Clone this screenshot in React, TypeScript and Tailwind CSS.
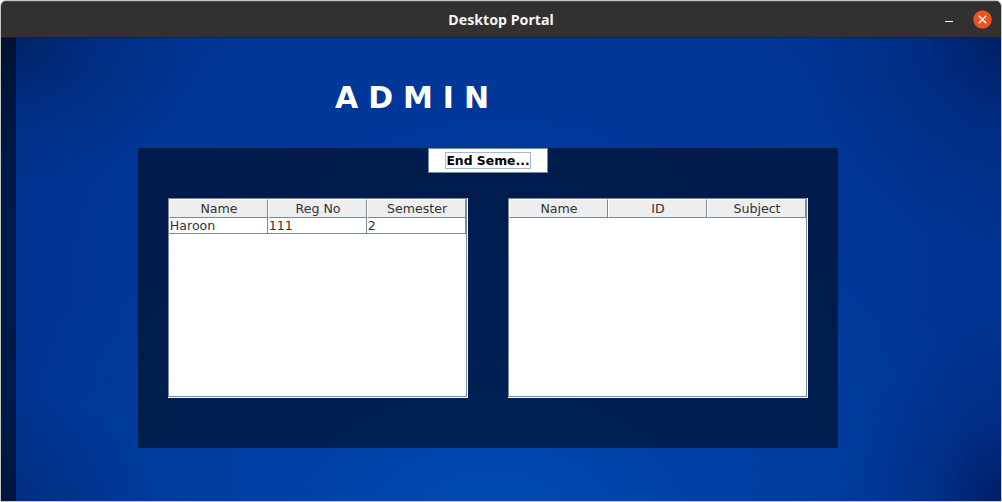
type TableProps = { columns: string[]; rows: string[][] };

const students: TableProps = {
  columns: ["Name", "Reg No", "Semester"],
  rows: [["Haroon", "111", "2"]],
};

const teachers: TableProps = {
  columns: ["Name", "ID", "Subject"],
  rows: [],
};

function DataTable({ columns, rows }: TableProps) {
  return (
    <div className="h-[200px] w-[300px] border-r border-b border-white">
      <div className="flex h-full w-full flex-col border border-[#7a8a99] bg-white text-[12.6px] leading-[15px] text-[#333333]">
        <div className="flex h-[19px] w-[297px] shrink-0 shadow-[1px_0_0_#7a8a99]">
          {columns.map((column) => (
            <div
              key={column}
              className="h-[19px] w-[99px] shrink-0 border-t border-r border-b border-l border-t-white border-r-[#7a8a99] border-b-[#7a8a99] border-l-white bg-[#eeeeee] pl-px text-center leading-[18px]"
            >
              {column}
            </div>
          ))}
        </div>
        {rows.map((row) => (
          <div key={row[0]} className="flex h-4 shrink-0">
            {row.map((cell, index) => (
              <div
                key={index}
                className="h-4 w-[99px] shrink-0 border-r border-b border-[#7a8a99] pl-[0.8px] leading-[16px]"
              >
                {cell}
              </div>
            ))}
          </div>
        ))}
      </div>
    </div>
  );
}

function TitleBar() {
  return (
    <header className="grid h-[37px] shrink-0 grid-cols-[1fr_auto_1fr] items-center border-t border-b border-t-[#484848] border-b-[#222222] bg-[#323030]">
      <span />
      <h1 className="font-['Noto_Sans','Open_Sans',sans-serif] text-[14.2px] leading-[20px] font-bold text-[#f5f5f5]">
        Desktop Portal
      </h1>
      <div className="flex items-center justify-end gap-[20px] pr-[9px] pb-px">
        <button aria-label="Minimize" className="flex h-[19px] w-2 items-center pt-[5px]">
          <span className="h-px w-2 bg-white" />
        </button>
        <button aria-label="Close" className="size-[19px]">
          <svg viewBox="0 0 19 19" className="block size-[19px]">
            <circle cx="9.5" cy="9.5" r="9.3" fill="#e95420" />
            <path d="M5.8 5.8l7.4 7.4M13.2 5.8l-7.4 7.4" stroke="#fff" strokeWidth="1.4" />
          </svg>
        </button>
      </div>
    </header>
  );
}

export default function App() {
  return (
    <div className="h-[502px] w-[1002px] bg-white">
      <div className="flex h-full w-full flex-col overflow-hidden rounded-t-[6px] border border-[#c5c7c5] font-['DejaVu_Sans',sans-serif]">
        <TitleBar />
        <main className="flex min-h-0 flex-1 bg-[#003594] bg-[radial-gradient(ellipse_190px_150px_at_1.5%_0%,#00205ccc_0%,#00287477_45%,transparent_100%),radial-gradient(ellipse_200px_210px_at_100%_0%,#001d60dd_0%,#00267477_40%,transparent_100%),radial-gradient(ellipse_150px_180px_at_100%_100%,#001b60dd_0%,#00257466_45%,transparent_100%),radial-gradient(ellipse_150px_110px_at_0%_100%,#00287499_0%,transparent_100%),radial-gradient(ellipse_55%_75%_at_49%_105%,#004ab4_0%,#0044aabb_40%,transparent_100%),radial-gradient(ellipse_60%_90%_at_50%_50%,#00399f_0%,#003797_60%,#00318d_100%)]">
          <aside className="w-[15px] shrink-0 bg-black/50" />
          <section className="flex flex-col pl-[122px]">
            <h2 className="mt-[42px] ml-[197px] h-[35px] text-[30px] leading-[35px] font-bold tracking-[-0.25px] whitespace-pre text-white">
              A D M I N
            </h2>
            <div className="mt-[33px] flex h-[300px] w-[700px] flex-col items-center bg-black/50">
              <button className="flex h-[25px] w-[120px] items-center justify-center border border-[#7a8a99] bg-white">
                <span className="h-[17px] w-[86px] border border-[#a3b8cc] text-center text-[12.4px] leading-[16px] font-bold whitespace-nowrap text-black">
                  End Seme...
                </span>
              </button>
              <div className="mt-[25px] flex gap-10">
                <DataTable {...students} />
                <DataTable {...teachers} />
              </div>
            </div>
          </section>
        </main>
      </div>
    </div>
  );
}
